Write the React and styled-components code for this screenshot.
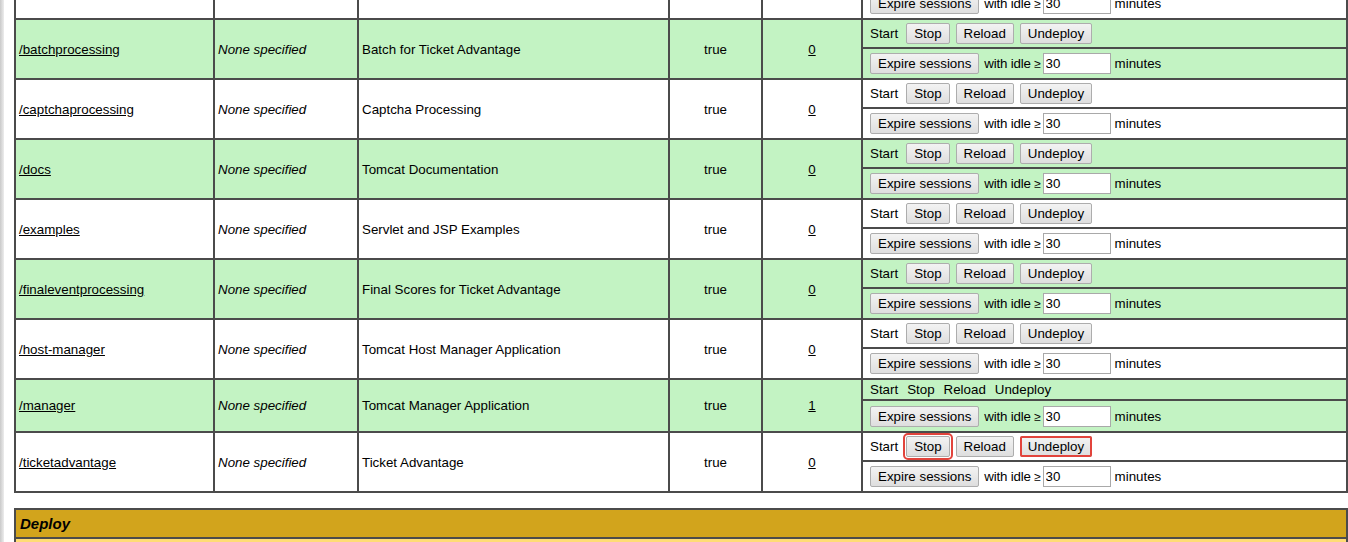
import styled, { createGlobalStyle } from "styled-components";

const GlobalStyle = createGlobalStyle`
  html, body {
    margin: 0;
    padding: 0;
    background: #fff;
    overflow: hidden;
  }
  body {
    font-family: "Liberation Sans", Arial, sans-serif;
    font-size: 13.33px;
    color: #000;
  }
`;

const apps = [
  { path: "/", name: "Welcome to Tomcat", sessions: 0 },
  { path: "/batchprocessing", name: "Batch for Ticket Advantage", sessions: 0 },
  { path: "/captchaprocessing", name: "Captcha Processing", sessions: 0 },
  { path: "/docs", name: "Tomcat Documentation", sessions: 0 },
  { path: "/examples", name: "Servlet and JSP Examples", sessions: 0 },
  { path: "/finaleventprocessing", name: "Final Scores for Ticket Advantage", sessions: 0 },
  { path: "/host-manager", name: "Tomcat Host Manager Application", sessions: 0 },
  { path: "/manager", name: "Tomcat Manager Application", sessions: 1, plain: true },
  { path: "/ticketadvantage", name: "Ticket Advantage", sessions: 0, marked: true },
];

const Frame = styled.div`
  display: flex;
  height: 542px;
  overflow: hidden;
`;

const WindowEdge = styled.div`
  flex: 0 0 4px;
  background: linear-gradient(to right, #c9c9c9, #ededed);
`;

const Content = styled.div`
  flex: 1;
  min-width: 0;
  padding-left: 10px;
`;

const Grid = styled.table`
  width: 1334px;
  table-layout: fixed;
  border-collapse: separate;
  border-spacing: 0;
  border: 1px solid #4b4b4b;
  margin-top: ${(p) => p.$offset}px;
`;

const Cell = styled.td`
  box-sizing: border-box;
  border: 1px solid #4b4b4b;
  padding: ${(p) => (p.$tight ? "2px 3px" : "3px")};
  vertical-align: middle;
  text-align: ${(p) => p.$align || "left"};
  font-style: ${(p) => (p.$italic ? "italic" : "normal")};
  background: ${(p) => (p.$green ? "#c3f3c3" : "#fff")};
  height: ${(p) => (p.$h ? `${p.$h}px` : "auto")};
  line-height: ${(p) => (p.$tight ? "15px" : "normal")};
  white-space: nowrap;
  overflow: hidden;
`;

const Link = styled.a`
  color: #000;
  text-decoration: underline;
`;

const Commands = styled.div`
  display: flex;
  align-items: center;
  gap: ${(p) => (p.$plain ? 9 : 6)}px;
  padding-left: 4px;
`;

const StartLabel = styled.span`
  margin-right: ${(p) => (p.$plain ? 0 : 2)}px;
`;

const CmdButton = styled.button`
  box-sizing: border-box;
  height: 21px;
  padding: 0 7px;
  font-family: "Liberation Sans", Arial, sans-serif;
  font-size: 13.33px;
  color: #000;
  background: linear-gradient(#f3f3f3, #dedede);
  border: 1px solid #adadad;
  border-radius: 2px;
  outline: ${(p) => (p.$marked ? "2px solid #e2443c" : "none")};
  outline-offset: ${(p) => p.$offset || 0}px;
`;

const IdleInput = styled.input`
  box-sizing: border-box;
  width: 68px;
  height: 21px;
  margin: 0 4px 0 2px;
  padding: 0 2px;
  font-family: "Liberation Sans", Arial, sans-serif;
  font-size: 13.33px;
  border: 1px solid #a9a9a9;
  background: #fff;
`;

const Expire = styled.div`
  display: flex;
  align-items: center;
  padding-left: 4px;
`;

const IdleLabel = styled.span`
  margin-left: 5px;
  letter-spacing: -0.2px;
`;

const Geq = styled.span`
  font-size: 12px;
`;

const TitleCell = styled.td`
  box-sizing: border-box;
  height: 29px;
  padding: 3px 4px;
  border: 1px solid #4b4b4b;
  background: #d2a41c;
  font-family: "Liberation Sans", Arial, sans-serif;
  font-size: 15px;
  font-weight: bold;
  font-style: italic;
`;

const HeaderCell = styled.td`
  box-sizing: border-box;
  height: 26px;
  border: 1px solid #4b4b4b;
  background: #ffdc75;
`;

function AppRow({ app, green }) {
  return (
    <>
      <tr>
        <Cell rowSpan={2} $green={green}>
          <Link href="#">{app.path}</Link>
        </Cell>
        <Cell rowSpan={2} $green={green} $italic>
          None specified
        </Cell>
        <Cell rowSpan={2} $green={green}>
          {app.name}
        </Cell>
        <Cell rowSpan={2} $green={green} $align="center">
          true
        </Cell>
        <Cell rowSpan={2} $green={green} $align="center">
          <Link href="#">{app.sessions}</Link>
        </Cell>
        {app.plain ? (
          <Cell $green={green} $h={21} $tight>
            <Commands $plain>
              <StartLabel $plain>Start</StartLabel>
              <span>Stop</span>
              <span>Reload</span>
              <span>Undeploy</span>
            </Commands>
          </Cell>
        ) : (
          <Cell $green={green} $h={29}>
            <Commands>
              <StartLabel>Start</StartLabel>
              <CmdButton $marked={app.marked} $offset={1}>Stop</CmdButton>
              <CmdButton>Reload</CmdButton>
              <CmdButton $marked={app.marked} $offset={-2}>Undeploy</CmdButton>
            </Commands>
          </Cell>
        )}
      </tr>
      <tr>
        <Cell $green={green} $h={app.plain ? 32 : 31}>
          <Expire>
            <CmdButton>Expire sessions</CmdButton>
            <IdleLabel>
              with idle <Geq>≥</Geq>
            </IdleLabel>
            <IdleInput defaultValue="30" />
            <span>minutes</span>
          </Expire>
        </Cell>
      </tr>
    </>
  );
}

export default function App() {
  return (
    <Frame>
      <GlobalStyle />
      <WindowEdge />
      <Content>
        <Grid $offset={-42}>
          <colgroup>
            <col style={{ width: 199 }} />
            <col style={{ width: 144 }} />
            <col style={{ width: 311 }} />
            <col style={{ width: 93 }} />
            <col style={{ width: 100 }} />
            <col style={{ width: 485 }} />
          </colgroup>
          <tbody>
            {apps.map((app, i) => (
              <AppRow key={app.path} app={app} green={i % 2 === 1} />
            ))}
          </tbody>
        </Grid>
        <Grid $offset={15}>
          <tbody>
            <tr>
              <TitleCell colSpan={2}>Deploy</TitleCell>
            </tr>
            <tr>
              <HeaderCell colSpan={2} />
            </tr>
          </tbody>
        </Grid>
      </Content>
    </Frame>
  );
}
